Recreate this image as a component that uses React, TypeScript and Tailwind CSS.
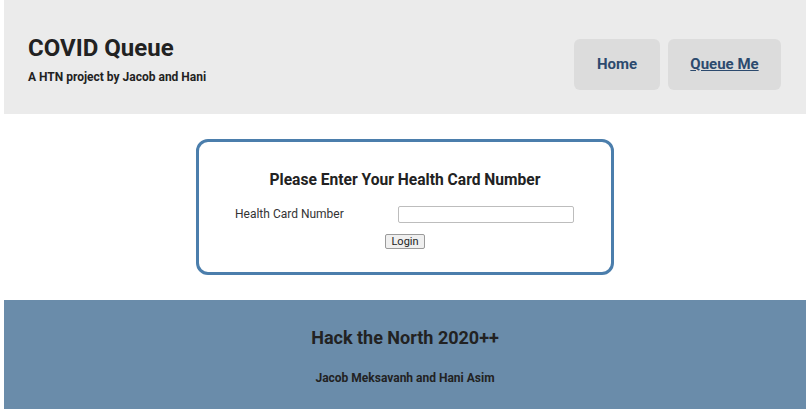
export default function App() {
  return (
    <div className="ml-[4px] min-h-[409px] bg-white font-['Roboto',sans-serif] text-[#222]">
      <header className="flex h-[114px] items-center justify-between bg-[#ebebeb] pl-[24px] pr-[25px]">
        <div className="mt-[4px]">
          <h1 className="text-[24px] font-bold leading-[30px] text-[#222]">COVID Queue</h1>
          <p className="mt-[5px] text-[12px] font-bold text-[#222]">A HTN project by Jacob and Hani</p>
        </div>
        <nav className="mt-[14px] flex gap-[8px]">
          <a className="flex h-[51px] w-[86px] items-center justify-center rounded-[6px] bg-[#dcdcdc] text-[15px] font-bold text-[#2c4a6e]">
            Home
          </a>
          <a className="flex h-[51px] w-[113px] items-center justify-center rounded-[6px] bg-[#dcdcdc] text-[15px] font-bold text-[#2c4a6e] underline">
            Queue Me
          </a>
        </nav>
      </header>

      <main className="flex justify-center pt-[25px] pb-[25px]">
        <div className="flex h-[136px] w-[418px] flex-col items-center rounded-[12px] border-[3px] border-[#4b7eac] pt-[28px]">
          <h2 className="text-[15.6px] font-bold leading-[20px] text-[#222]">Please Enter Your Health Card Number</h2>
          <div className="mt-[15px] flex w-full items-center pl-[36px]">
            <label className="w-[163px] text-[12px] text-[#333]">Health Card Number</label>
            <input className="h-[17px] w-[176px] rounded-[2px] border border-[#bdbdbd] bg-white" />
          </div>
          <button className="mt-[11px] h-[15px] rounded-[2px] border border-[#9a9a9a] bg-[#efefef] px-[5px] text-[11px] leading-[12px] text-[#222]">
            Login
          </button>
        </div>
      </main>

      <footer className="flex h-[109px] flex-col items-center bg-[#6a8caa] pt-[27px]">
        <h3 className="text-[18px] font-bold leading-[22px] text-[#222]">Hack the North 2020++</h3>
        <p className="mt-[20px] text-[12px] font-bold text-[#222]">Jacob Meksavanh and Hani Asim</p>
      </footer>
    </div>
  );
}
